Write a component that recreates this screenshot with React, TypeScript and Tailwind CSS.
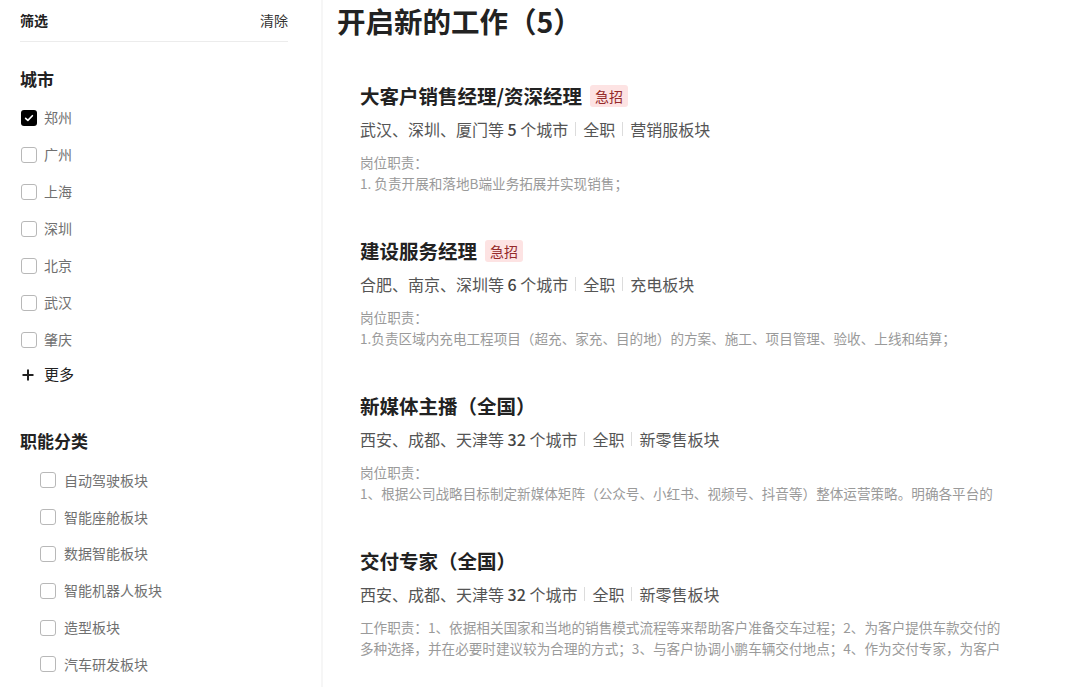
const cities = ["郑州", "广州", "上海", "深圳", "北京", "武汉", "肇庆"];
const categories = ["自动驾驶板块", "智能座舱板块", "数据智能板块", "智能机器人板块", "造型板块", "汽车研发板块"];

type Job = {
    title: string;
    urgent?: boolean;
    cities: string;
    count: string;
    type: string;
    dept: string;
    label?: string;
    desc: string;
};

const jobs: Job[] = [
    {
        title: "大客户销售经理/资深经理",
        urgent: true,
        cities: "武汉、深圳、厦门等",
        count: "5",
        type: "全职",
        dept: "营销服板块",
        label: "岗位职责：",
        desc: "1. 负责开展和落地B端业务拓展并实现销售；",
    },
    {
        title: "建设服务经理",
        urgent: true,
        cities: "合肥、南京、深圳等",
        count: "6",
        type: "全职",
        dept: "充电板块",
        label: "岗位职责：",
        desc: "1.负责区域内充电工程项目（超充、家充、目的地）的方案、施工、项目管理、验收、上线和结算；",
    },
    {
        title: "新媒体主播（全国）",
        cities: "西安、成都、天津等",
        count: "32",
        type: "全职",
        dept: "新零售板块",
        label: "岗位职责：",
        desc: "1、根据公司战略目标制定新媒体矩阵（公众号、小红书、视频号、抖音等）整体运营策略。明确各平台的",
    },
    {
        title: "交付专家（全国）",
        cities: "西安、成都、天津等",
        count: "32",
        type: "全职",
        dept: "新零售板块",
        desc: "工作职责：1、依据相关国家和当地的销售模式流程等来帮助客户准备交车过程；2、为客户提供车款交付的多种选择，并在必要时建议较为合理的方式；3、与客户协调小鹏车辆交付地点；4、作为交付专家，为客户",
    },
];

function Box({ checked }: { checked?: boolean }) {
    if (checked) {
        return (
            <span className="flex size-4 items-center justify-center rounded-[3px] bg-black">
                <svg viewBox="0 0 16 16" className="size-3" fill="none" stroke="white" strokeWidth={2.2} strokeLinecap="round" strokeLinejoin="round">
                    <path d="M3.5 8.5 6.5 11.2 12.5 5" />
                </svg>
            </span>
        );
    }
    return <span className="size-4 rounded-[3px] border border-[#b8b8b8] bg-white" />;
}

function Sep() {
    return <span className="mx-[7px] inline-block h-[14px] w-px bg-[#dcdcdc]" />;
}

export default function App() {
    return (
        <div
            className="flex min-h-screen bg-white text-[#222]"
            style={{ fontFamily: '"Noto Sans CJK SC", "Noto Sans", sans-serif' }}
        >
            <aside className="w-[323px] shrink-0 border-r-2 border-[#f6f6f6] pl-5 pr-[33px]">
                <div className="flex h-[42px] items-center justify-between border-b border-[#ececec] text-[14px]">
                    <span className="font-bold text-[#222]">筛选</span>
                    <span className="text-[#333]">清除</span>
                </div>

                <h3 className="mt-[25px] text-[17px] font-bold leading-6">城市</h3>
                <ul className="mt-[8px]">
                    {cities.map((c, i) => (
                        <li key={c} className="flex h-[37px] items-center gap-[7px] pl-px text-[14px] text-[#707070]">
                            <Box checked={i === 0} />
                            {c}
                        </li>
                    ))}
                    <li className="flex h-[33px] items-center gap-[8px] text-[15px] text-[#222]">
                        <svg viewBox="0 0 16 16" className="size-4" fill="none" stroke="currentColor" strokeWidth={2}>
                            <path d="M8 2.5v11M2.5 8h11" />
                        </svg>
                        更多
                    </li>
                </ul>

                <h3 className="mt-[38px] text-[17px] font-bold leading-6">职能分类</h3>
                <ul className="mt-[9px] pl-5">
                    {categories.map((c) => (
                        <li key={c} className="flex h-[36.8px] items-center gap-[8px] text-[14px] text-[#707070]">
                            <Box />
                            {c}
                        </li>
                    ))}
                </ul>
            </aside>

            <main className="flex-1 pl-[14px]">
                <h1 className="flex h-[42px] items-center text-[28.5px] font-bold leading-none text-[#222]">开启新的工作（5）</h1>

                <div className="mt-[40px] flex flex-col gap-[43px] pl-[23px]">
                    {jobs.map((j) => (
                        <div key={j.title}>
                            <div className="flex h-[28px] items-center">
                                <h2 className="text-[19.5px] font-bold text-[#222]">{j.title}</h2>
                                {j.urgent && (
                                    <span className="ml-[8px] flex h-[22px] items-center rounded-[3px] bg-[#fde3e3] px-[5px] text-[14px] text-[#952a2a]">
                                        急招
                                    </span>
                                )}
                            </div>
                            <div className="mt-[7px] flex h-6 items-center text-[16px] text-[#555]">
                                <span>
                                    {j.cities} <span className="font-medium text-[#444]">{j.count}</span> 个城市
                                </span>
                                <Sep />
                                <span>{j.type}</span>
                                <Sep />
                                <span>{j.dept}</span>
                            </div>
                            <div className="mt-[11px] max-w-[650px] text-[13.6px] leading-[21px] text-[#9a9a9a]">
                                {j.label && <p>{j.label}</p>}
                                <p>{j.desc}</p>
                            </div>
                        </div>
                    ))}
                </div>
            </main>
        </div>
    );
}
